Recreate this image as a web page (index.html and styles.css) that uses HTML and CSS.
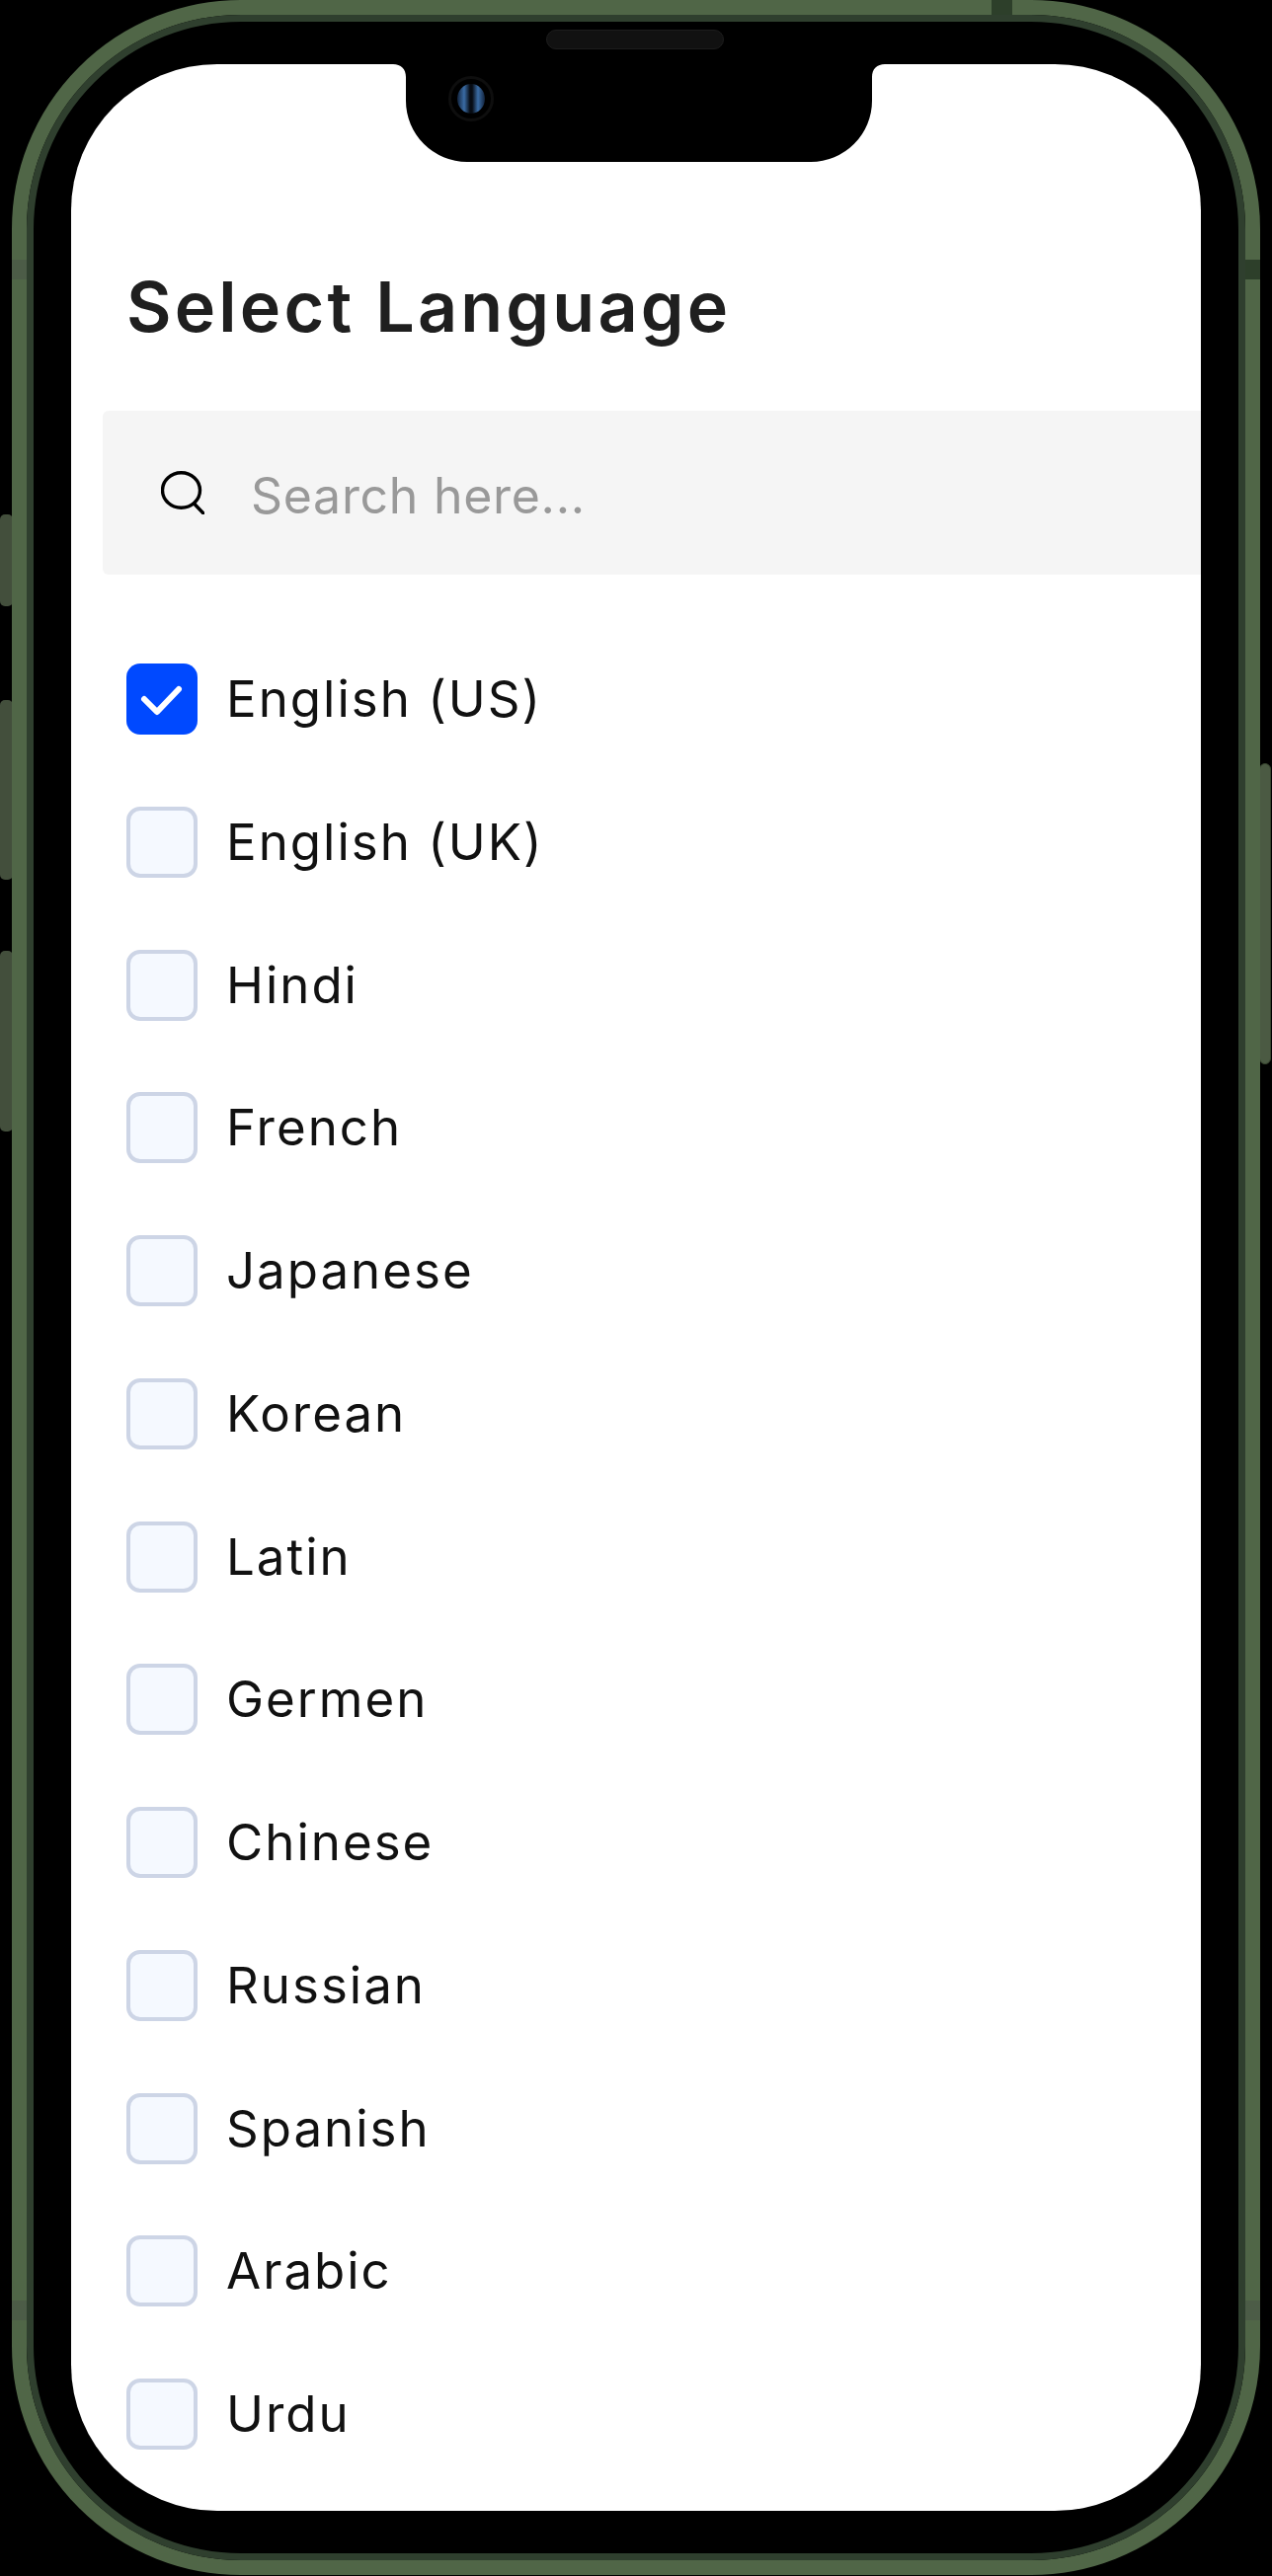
FILE: index.html
```html
<!DOCTYPE html>
<html lang="en">
<head>
<meta charset="utf-8">
<title>Select Language</title>
<link rel="stylesheet" href="styles.css">
</head>
<body>
<div class="phone">
  <span class="btn btn-l1"></span>
  <span class="btn btn-l2"></span>
  <span class="btn btn-l3"></span>
  <span class="btn btn-r"></span>
  <div class="bezel">
    <span class="strip strip-top"></span>
    <span class="strip strip-rt"></span>
    <span class="strip strip-lt"></span>
    <span class="strip strip-rb"></span>
    <span class="strip strip-lb"></span>
    <div class="inner">
      <div class="screen">
        <h1 class="title">Select Language</h1>
        <div class="search">
          <svg class="search-icon" viewBox="0 0 44 44" fill="none" stroke="#000" stroke-width="3.4" stroke-linecap="round"><ellipse cx="20.5" cy="19.5" rx="19" ry="17.8"/><path d="M33.5 33 43 43"/></svg>
          <span class="placeholder">Search here...</span>
        </div>
        <ul class="list">
          <li class="row"><span class="box box-on"><svg viewBox="0 0 72 72" fill="none" stroke="#fff" stroke-width="6" stroke-linecap="round" stroke-linejoin="round"><path d="M18 36 31 49 53 26"/></svg></span><span class="label">English (US)</span></li>
          <li class="row"><span class="box"></span><span class="label">English (UK)</span></li>
          <li class="row"><span class="box"></span><span class="label">Hindi</span></li>
          <li class="row"><span class="box"></span><span class="label">French</span></li>
          <li class="row"><span class="box"></span><span class="label">Japanese</span></li>
          <li class="row"><span class="box"></span><span class="label">Korean</span></li>
          <li class="row"><span class="box"></span><span class="label">Latin</span></li>
          <li class="row"><span class="box"></span><span class="label">Germen</span></li>
          <li class="row"><span class="box"></span><span class="label">Chinese</span></li>
          <li class="row"><span class="box"></span><span class="label">Russian</span></li>
          <li class="row"><span class="box"></span><span class="label">Spanish</span></li>
          <li class="row"><span class="box"></span><span class="label">Arabic</span></li>
          <li class="row"><span class="box"></span><span class="label">Urdu</span></li>
        </ul>
      </div>
      <svg class="notch" viewBox="0 0 498 99"><path d="M0 0C8 0 13 5 13 13V37A62 62 0 0 0 75 99H423A62 62 0 0 0 485 37V13C485 5 490 0 498 0Z" fill="#000"/></svg>
      <span class="speaker"></span>
      <span class="camera"><span class="lens"></span></span>
    </div>
  </div>
</div>
</body>
</html>
```

FILE: styles.css
```css
* { box-sizing: border-box; }
html, body { margin: 0; padding: 0; background: #000; }
body { width: 1288px; height: 2609px; overflow: hidden; padding: 0 12px 0 12px; }

.phone { position: relative; width: 1264px; height: 2608px; }

.btn { position: absolute; width: 13px; background: #434f3c; border-radius: 5px; }
.btn-l1 { left: -12px; top: 521px; height: 93px; }
.btn-l2 { left: -12px; top: 709px; height: 182px; }
.btn-l3 { left: -12px; top: 963px; height: 183px; }
.btn-r { right: -11px; top: 773px; height: 305px; width: 12px; background: #4b5a43; border: 1px solid #38452f; border-radius: 6px; }

.bezel { position: relative; width: 100%; height: 100%; border: 15px solid #506647; border-radius: 232px; }

.strip { position: absolute; }
.strip-top { top: -15px; left: 977px; width: 21px; height: 21px; background: #2d3f2a; }
.strip-rt { top: 248px; right: -15px; width: 22px; height: 20px; background: #2d3f2a; }
.strip-lt { top: 248px; left: -15px; width: 15px; height: 20px; background: #4c5c47; }
.strip-rb { top: 2315px; right: -15px; width: 15px; height: 20px; background: #4c5c47; }
.strip-lb { top: 2315px; left: -15px; width: 15px; height: 20px; background: #4c5c47; }

.inner { position: relative; width: 100%; height: 100%; background: #000; border: 7px solid #2f3f2e; border-radius: 217px; padding: 43px 38px 45px; }

.screen { height: 2478px; background: #fff; border-radius: 148px; overflow: hidden; padding-top: 206px; }

.title { margin: 0 0 65px 56px; height: 80px; font: 600 70px/80px Inter, "Liberation Sans", sans-serif; color: #1f1f1f; letter-spacing: 3.2px; white-space: nowrap; }

.search { display: flex; align-items: center; width: 1200px; height: 166px; margin-left: 32px; padding-left: 59px; background: #f5f5f5; border-radius: 6px; }
.search-icon { width: 44px; height: 44px; flex: none; }
.placeholder { margin-left: 47px; padding-top: 6px; font: 400 50px/60px Inter, "Liberation Sans", sans-serif; color: #999; letter-spacing: 0.7px; }

.list { display: flex; flex-direction: column; gap: 72.75px; margin: 90px 0 0 56px; padding: 0; list-style: none; }
.row { display: flex; align-items: center; height: 72px; gap: 29px; }

.box { width: 72px; height: 72px; flex: none; background: #f5f9ff; border: 4px solid #cdd5e6; border-radius: 14px; }
.box svg { display: block; width: 72px; height: 72px; }
.box-on { background: #0049ff; border: 0; }

.label { font: 400 51px/60px Inter, "Liberation Sans", sans-serif; color: #111; letter-spacing: 2px; white-space: nowrap; }

.notch { position: absolute; top: 43px; left: 364px; width: 498px; height: 99px; }
.speaker { position: absolute; top: 8px; left: 519px; width: 180px; height: 20px; background: #111; border: 1px solid #1d1d1d; border-radius: 10px; }
.camera { position: absolute; top: 55px; left: 420px; width: 46px; height: 46px; display: flex; align-items: center; justify-content: center; border-radius: 50%; background: #000; border: 3px solid #0e0e0e; }
.lens { width: 28px; height: 30px; border-radius: 50%; background: linear-gradient(90deg, #12233c, #3a6ca5 25%, #070c14 46%, #070c14 54%, #3a6ca5 75%, #12233c); }
```
